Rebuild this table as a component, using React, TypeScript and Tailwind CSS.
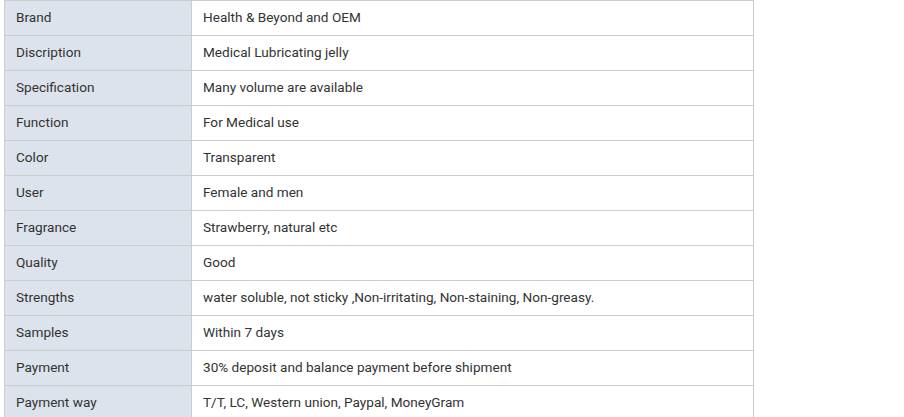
const rows: [string, string][] = [
  ["Brand", "Health & Beyond and OEM"],
  ["Discription", "Medical Lubricating jelly"],
  ["Specification", "Many volume are available"],
  ["Function", "For Medical use"],
  ["Color", "Transparent"],
  ["User", "Female and men"],
  ["Fragrance", "Strawberry, natural etc"],
  ["Quality", "Good"],
  ["Strengths", "water soluble, not sticky ,Non-irritating, Non-staining, Non-greasy."],
  ["Samples", "Within 7 days"],
  ["Payment", "30% deposit and balance payment before shipment"],
  ["Payment way", "T/T, LC, Western union, Paypal, MoneyGram"],
];

export default function App() {
  return (
    <div className="bg-white pl-[4px] font-['Roboto',sans-serif] text-[13.6px] text-[#333]">
      <table className="w-[750px] border-collapse">
        <tbody>
          {rows.map(([k, v]) => (
            <tr key={k} className="h-[35px]">
              <td className="w-[187px] border border-[#cccccc] bg-[#dde3ec] px-[11px] pb-[2px] align-middle">
                {k}
              </td>
              <td className="border border-[#cccccc] px-[11px] pb-[2px] align-middle">{v}</td>
            </tr>
          ))}
        </tbody>
      </table>
    </div>
  );
}
